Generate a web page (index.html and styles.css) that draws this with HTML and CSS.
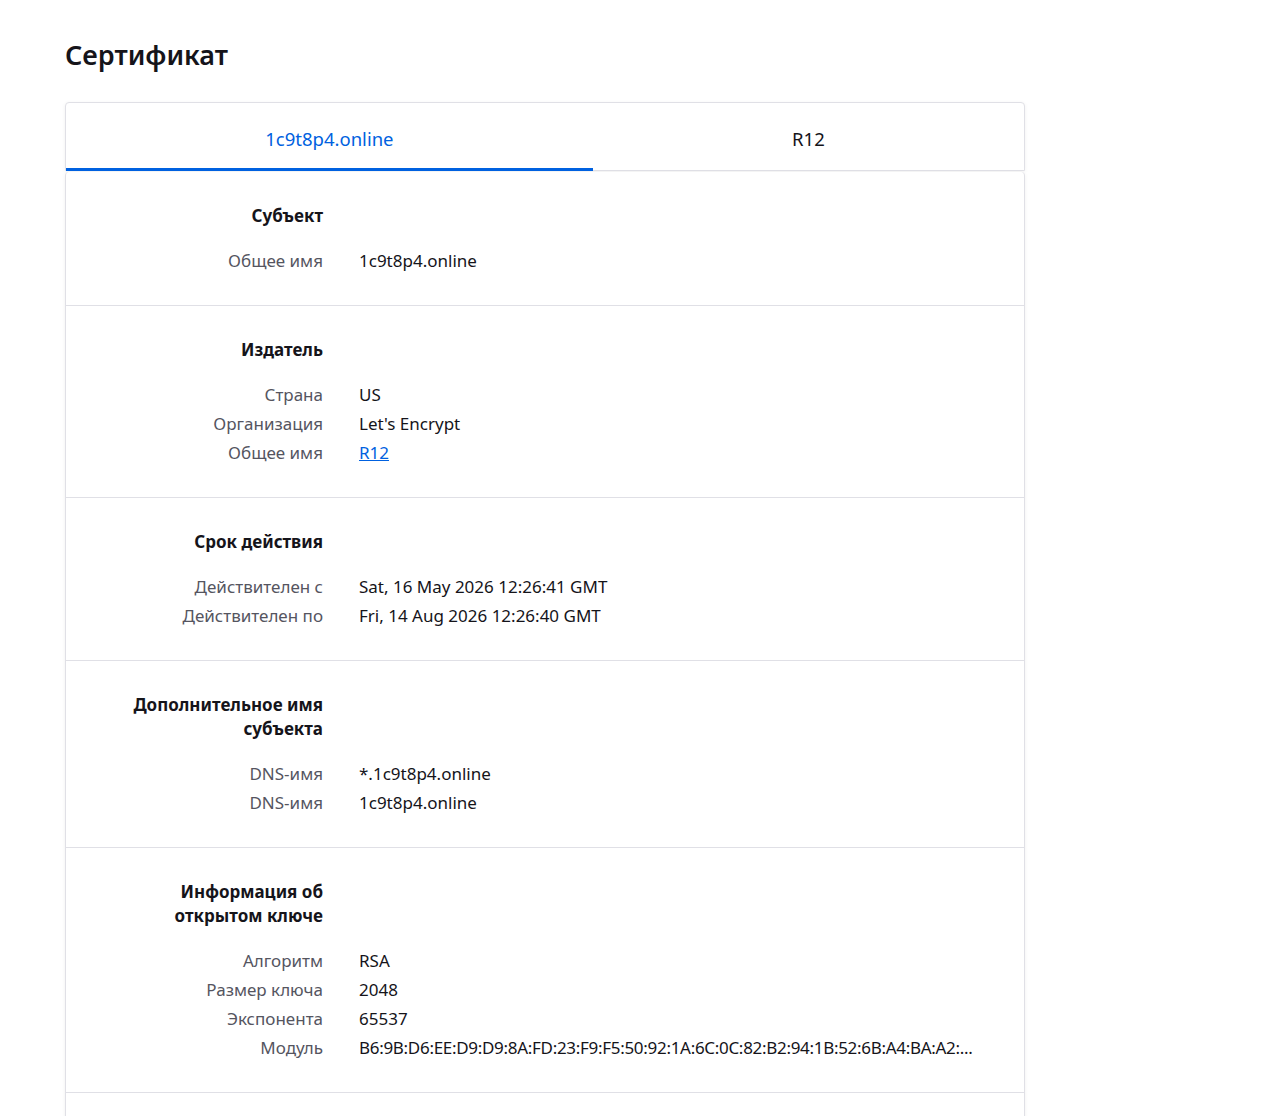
FILE: index.html
```html
<!DOCTYPE html>
<html lang="ru">
<head>
  <meta charset="UTF-8" />
  <title>Сертификат</title>
  <link rel="stylesheet" href="styles.css">
</head>
<body>
  <h1 class="page-title">Сертификат</h1>

  <div class="cert">
    <div class="tabs">
      <button class="tab selected">1c9t8p4.online</button>
      <button class="tab">R12</button>
    </div>

    <div class="panel">
      <section class="info-group">
        <h2 class="group-title">Субъект</h2>
        <div class="row"><span class="label">Общее имя</span><span class="value">1c9t8p4.online</span></div>
      </section>

      <section class="info-group">
        <h2 class="group-title">Издатель</h2>
        <div class="row"><span class="label">Страна</span><span class="value">US</span></div>
        <div class="row"><span class="label">Организация</span><span class="value">Let's Encrypt</span></div>
        <div class="row"><span class="label">Общее имя</span><span class="value"><a href="#" class="link">R12</a></span></div>
      </section>

      <section class="info-group">
        <h2 class="group-title">Срок действия</h2>
        <div class="row"><span class="label">Действителен с</span><span class="value">Sat, 16 May 2026 12:26:41 GMT</span></div>
        <div class="row"><span class="label">Действителен по</span><span class="value">Fri, 14 Aug 2026 12:26:40 GMT</span></div>
      </section>

      <section class="info-group">
        <h2 class="group-title">Дополнительное имя субъекта</h2>
        <div class="row"><span class="label">DNS-имя</span><span class="value">*.1c9t8p4.online</span></div>
        <div class="row"><span class="label">DNS-имя</span><span class="value">1c9t8p4.online</span></div>
      </section>

      <section class="info-group">
        <h2 class="group-title">Информация об открытом ключе</h2>
        <div class="row"><span class="label">Алгоритм</span><span class="value">RSA</span></div>
        <div class="row"><span class="label">Размер ключа</span><span class="value">2048</span></div>
        <div class="row"><span class="label">Экспонента</span><span class="value">65537</span></div>
        <div class="row"><span class="label">Модуль</span><span class="value long">B6:9B:D6:EE:D9:D9:8A:FD:23:F9:F5:50:92:1A:6C:0C:82:B2:94:1B:52:6B:A4:BA:A2:...</span></div>
      </section>

      <section class="info-group">
        <h2 class="group-title">Прочее</h2>
        <div class="row"><span class="label">Серийный номер</span><span class="value">05:8A:1F:0E:3B:77:C2:91:D4:6E:02:AB:19:F3:58:C7:40:2D</span></div>
      </section>
    </div>
  </div>
</body>
</html>
```

FILE: styles.css
```css
body { margin: 0; padding: 20px 250px 40px 65px; background: #fff; color: #15141a; font-family: "Noto Sans", "Open Sans", sans-serif; font-size: 17px; }
.page-title { margin: 15px 0 27px; font-size: 27px; font-weight: 600; line-height: 40px; }

.cert { width: 960px; }
.tabs { display: flex; height: 69px; border: 1px solid #e0e0e6; border-radius: 4px 4px 0 0; box-shadow: 0 1px 4px rgba(0,0,0,0.06); box-sizing: border-box; background: #fff; }
.tab { flex: 1 1 auto; padding: 5px 20px 0; border: none; border-bottom: 3px solid transparent; background: none; font: inherit; font-size: 18.5px; color: #15141a; cursor: pointer; margin-bottom: -1px; }
.tab.selected { color: #0061e0; border-bottom-color: #0061e0; }

.panel { margin-top: 1px; border: 1px solid #e0e0e6; border-top: none; border-radius: 4px 4px 0 0; box-shadow: 0 1px 4px rgba(0,0,0,0.06); background: #fff; }
.info-group { padding: 32px 0 30px; border-top: 1px solid #e0e0e6; }
.info-group:first-child { border-top: none; }
.group-title { width: 222px; margin: 0 0 18px 35px; text-align: right; font-size: 17px; font-weight: 700; line-height: 24px; }
.row { display: flex; line-height: 29px; }
.label { width: 222px; margin-left: 35px; flex: none; text-align: right; color: #55555f; }
.value { margin-left: 36px; white-space: nowrap; }
.value.long { letter-spacing: -0.3px; }
.link { color: #0061e0; }
```
